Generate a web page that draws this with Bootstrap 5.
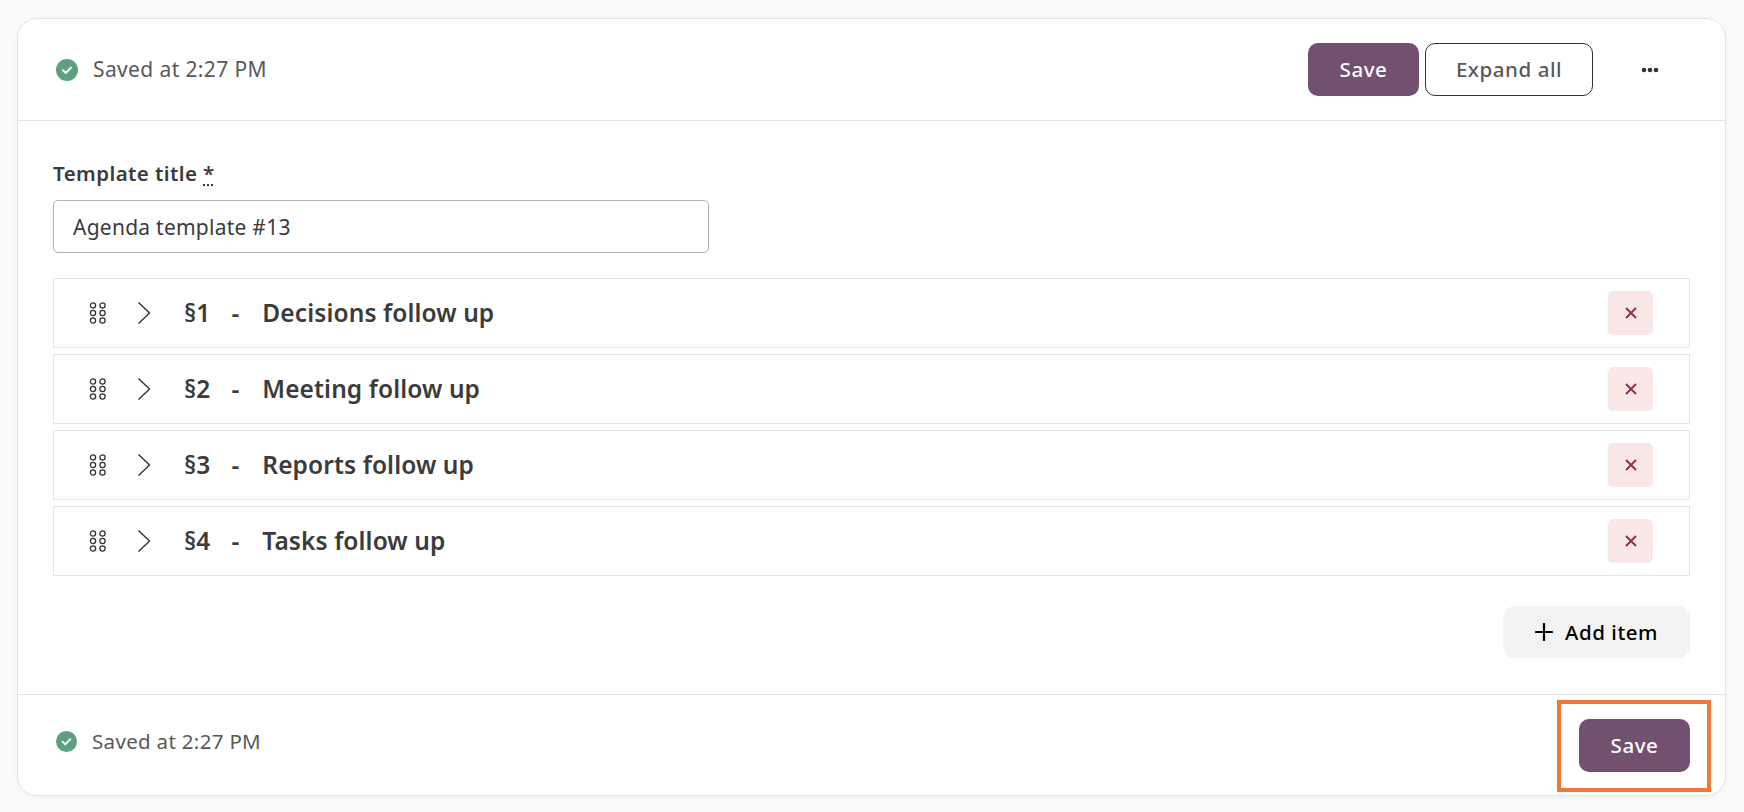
<!DOCTYPE html>
<html lang="en">
<head>
<meta charset="utf-8">
<title>Agenda template</title>
<link href="https://cdn.jsdelivr.net/npm/bootstrap@5.3.0/dist/css/bootstrap.min.css" rel="stylesheet">
<style>
html,body{height:100%}
body{background:#fafafa;font-family:"Noto Sans","Lato",sans-serif;color:#3b3b3b;padding:18px 18px 16px 17px;overflow:hidden}
.tpl-card{height:778px;background:#fff;border:1px solid #e4e4e4;border-radius:20px;box-shadow:0 2px 8px rgba(0,0,0,.03);display:flex;flex-direction:column}
.tpl-head{height:102px;border-bottom:1px solid #e4e4e4;padding:0 0 0 38px}
.tpl-body{padding:37px 35px 0 35px;flex:1}
.tpl-foot{height:101px;border-top:1px solid #e4e4e4;padding:0 35px 0 38px}
.saved{font-size:21px;color:#595959;gap:15px;letter-spacing:.38px}
.saved svg{flex:none}
.tpl-foot .saved{font-size:20.5px;gap:15px;padding-bottom:8px;letter-spacing:.32px}
.btn-save{background:#725170;color:#fff;border:0;border-radius:10px;width:111px;height:53px;font-size:20.5px;font-weight:500;letter-spacing:.55px;padding:0}
.btn-save:hover{background:#725170;color:#fff}
.btn-expand{background:#fff;color:#595959;border:1px solid #333;border-radius:10px;width:168px;height:53px;font-size:20.5px;font-weight:500;letter-spacing:.55px;padding:0;margin-left:6px}
.btn-more{width:52px;margin-left:31px;margin-right:49px;padding:0;border:0;background:none;line-height:0}
.tpl-label{font-size:20.5px;font-weight:600;letter-spacing:.42px;color:#3b3b3b;margin-bottom:12px;line-height:30px;display:block}
.req{text-decoration:underline dotted;text-underline-offset:3px}
.tpl-input{width:656px;height:53px;border:1px solid #b3b3b3;border-radius:5px;font-size:21px;letter-spacing:.25px;color:#3b3b3b;padding:0 19px;margin-bottom:25px}
.tpl-input:focus{border-color:#b3b3b3;box-shadow:none;color:#3b3b3b}
.tpl-row{height:70px;border:1px solid #e4e4e4;margin-bottom:6px;padding:0 36px 0 35px;background:#fff}
.tpl-row:last-child{margin-bottom:0}
.row-title{font-size:24.5px;font-weight:600;letter-spacing:.1px;color:#3b3b3b;white-space:nowrap;margin-left:33px;gap:21px}
.row-name{margin-left:2px}
.chev{margin-left:30px}
.btn-del{width:45px;height:44px;background:#fae8e9;border:0;border-radius:5px;padding:0;line-height:0;margin-left:auto}
.btn-add{width:187px;height:52px;background:#f3f3f3;color:#000;border:0;border-radius:12px;font-size:20.5px;font-weight:500;letter-spacing:.55px;padding:0;gap:12px;margin-top:30px}
.btn-add:hover{background:#f3f3f3;color:#000}
.mark-wrap{position:relative}
.mark-box{position:absolute;left:-22px;right:-21px;top:-19px;bottom:-20px;border:4px solid #f07833;pointer-events:none}
</style>
</head>
<body>
<div class="tpl-card">
  <div class="tpl-head d-flex align-items-center justify-content-between">
    <div class="saved d-flex align-items-center">
      <svg width="22" height="22" viewBox="0 0 22 22"><circle cx="11" cy="11" r="11" fill="#5f9f80"/><path d="M7 11.3l2.8 2.7L15 8.6" fill="none" stroke="#fff" stroke-width="2" stroke-linecap="round" stroke-linejoin="round"/></svg>
      <span>Saved at 2:27 PM</span>
    </div>
    <div class="d-flex align-items-center">
      <button class="btn btn-save" type="button">Save</button>
      <button class="btn btn-expand" type="button">Expand all</button>
      <button class="btn-more" type="button" aria-label="More"><svg width="18" height="6" viewBox="0 0 18 6"><circle cx="3" cy="3" r="2.3" fill="#333"/><circle cx="9" cy="3" r="2.3" fill="#333"/><circle cx="15" cy="3" r="2.3" fill="#333"/></svg></button>
    </div>
  </div>
  <div class="tpl-body">
    <label class="tpl-label" for="tt">Template title <span class="req">*</span></label>
    <input id="tt" class="form-control tpl-input" type="text" value="Agenda template #13">
    <div>
      <div class="tpl-row d-flex align-items-center">
        <svg width="18" height="22" viewBox="0 0 18 22" fill="none" stroke="#333" stroke-width="1.3"><circle cx="4" cy="3.5" r="2.6"/><circle cx="13.5" cy="3.5" r="2.6"/><circle cx="4" cy="11" r="2.6"/><circle cx="13.5" cy="11" r="2.6"/><circle cx="4" cy="18.5" r="2.6"/><circle cx="13.5" cy="18.5" r="2.6"/></svg>
        <svg class="chev" width="14" height="24" viewBox="0 0 14 24" fill="none" stroke="#333" stroke-width="1.4"><path d="M1.5 1.5L12.5 12 1.5 22.5"/></svg>
        <div class="row-title d-flex"><span>§1</span><span>-</span><span class="row-name">Decisions follow up</span></div>
        <button class="btn-del" type="button" aria-label="Delete"><svg width="12" height="12" viewBox="0 0 12 12"><path d="M1 1l10 10M11 1L1 11" stroke="#96333c" stroke-width="2"/></svg></button>
      </div>
      <div class="tpl-row d-flex align-items-center">
        <svg width="18" height="22" viewBox="0 0 18 22" fill="none" stroke="#333" stroke-width="1.3"><circle cx="4" cy="3.5" r="2.6"/><circle cx="13.5" cy="3.5" r="2.6"/><circle cx="4" cy="11" r="2.6"/><circle cx="13.5" cy="11" r="2.6"/><circle cx="4" cy="18.5" r="2.6"/><circle cx="13.5" cy="18.5" r="2.6"/></svg>
        <svg class="chev" width="14" height="24" viewBox="0 0 14 24" fill="none" stroke="#333" stroke-width="1.4"><path d="M1.5 1.5L12.5 12 1.5 22.5"/></svg>
        <div class="row-title d-flex"><span>§2</span><span>-</span><span class="row-name">Meeting follow up</span></div>
        <button class="btn-del" type="button" aria-label="Delete"><svg width="12" height="12" viewBox="0 0 12 12"><path d="M1 1l10 10M11 1L1 11" stroke="#96333c" stroke-width="2"/></svg></button>
      </div>
      <div class="tpl-row d-flex align-items-center">
        <svg width="18" height="22" viewBox="0 0 18 22" fill="none" stroke="#333" stroke-width="1.3"><circle cx="4" cy="3.5" r="2.6"/><circle cx="13.5" cy="3.5" r="2.6"/><circle cx="4" cy="11" r="2.6"/><circle cx="13.5" cy="11" r="2.6"/><circle cx="4" cy="18.5" r="2.6"/><circle cx="13.5" cy="18.5" r="2.6"/></svg>
        <svg class="chev" width="14" height="24" viewBox="0 0 14 24" fill="none" stroke="#333" stroke-width="1.4"><path d="M1.5 1.5L12.5 12 1.5 22.5"/></svg>
        <div class="row-title d-flex"><span>§3</span><span>-</span><span class="row-name">Reports follow up</span></div>
        <button class="btn-del" type="button" aria-label="Delete"><svg width="12" height="12" viewBox="0 0 12 12"><path d="M1 1l10 10M11 1L1 11" stroke="#96333c" stroke-width="2"/></svg></button>
      </div>
      <div class="tpl-row d-flex align-items-center">
        <svg width="18" height="22" viewBox="0 0 18 22" fill="none" stroke="#333" stroke-width="1.3"><circle cx="4" cy="3.5" r="2.6"/><circle cx="13.5" cy="3.5" r="2.6"/><circle cx="4" cy="11" r="2.6"/><circle cx="13.5" cy="11" r="2.6"/><circle cx="4" cy="18.5" r="2.6"/><circle cx="13.5" cy="18.5" r="2.6"/></svg>
        <svg class="chev" width="14" height="24" viewBox="0 0 14 24" fill="none" stroke="#333" stroke-width="1.4"><path d="M1.5 1.5L12.5 12 1.5 22.5"/></svg>
        <div class="row-title d-flex"><span>§4</span><span>-</span><span class="row-name">Tasks follow up</span></div>
        <button class="btn-del" type="button" aria-label="Delete"><svg width="12" height="12" viewBox="0 0 12 12"><path d="M1 1l10 10M11 1L1 11" stroke="#96333c" stroke-width="2"/></svg></button>
      </div>
    </div>
    <div class="d-flex justify-content-end">
      <button class="btn btn-add d-inline-flex align-items-center justify-content-center" type="button"><svg width="18" height="18" viewBox="0 0 18 18"><path d="M9 1v16M1 9h16" stroke="#000" stroke-width="2.2" stroke-linecap="round"/></svg>Add item</button>
    </div>
  </div>
  <div class="tpl-foot d-flex align-items-center justify-content-between">
    <div class="saved d-flex align-items-center">
      <svg width="21" height="21" viewBox="0 0 22 22"><circle cx="11" cy="11" r="11" fill="#5f9f80"/><path d="M7 11.3l2.8 2.7L15 8.6" fill="none" stroke="#fff" stroke-width="2" stroke-linecap="round" stroke-linejoin="round"/></svg>
      <span>Saved at 2:27 PM</span>
    </div>
    <div class="mark-wrap d-flex">
      <button class="btn btn-save" type="button">Save</button>
      <div class="mark-box"></div>
    </div>
  </div>
</div>
<script src="https://cdn.jsdelivr.net/npm/bootstrap@5.3.0/dist/js/bootstrap.bundle.min.js"></script>
</body>
</html>
